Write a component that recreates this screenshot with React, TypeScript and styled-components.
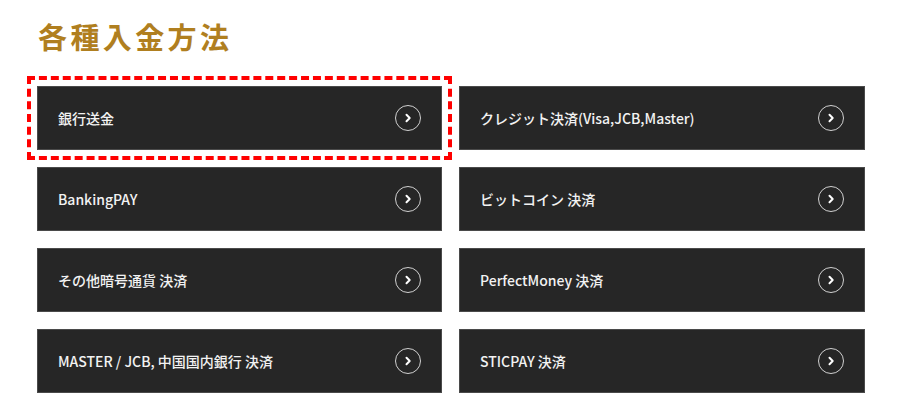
import styled, { createGlobalStyle } from 'styled-components';

const GlobalStyle = createGlobalStyle`
  body {
    margin: 0;
    background: #ffffff;
    font-family: "Noto Sans CJK JP", "Noto Sans", sans-serif;
  }
`;

const Section = styled.section`
  padding: 17px 35px 0 37px;
`;

const Heading = styled.h2`
  margin: 0 0 31px 1px;
  font-size: 29px;
  line-height: 38px;
  font-weight: 700;
  letter-spacing: 3.4px;
  color: #b07f1f;
`;

const Grid = styled.div`
  display: grid;
  grid-template-columns: 405px 406px;
  column-gap: 17px;
  row-gap: 17px;
`;

const Card = styled.a<{ $selected?: boolean }>`
  display: flex;
  align-items: center;
  justify-content: space-between;
  height: 64px;
  box-sizing: border-box;
  padding: 0 20px 0 20px;
  background: #262626;
  border: 1px solid #4a4a4a;
  color: #f2f2f2;
  text-decoration: none;
  font-size: 14px;
  font-weight: 500;
  outline: ${({ $selected }) => ($selected ? '4px dashed #f00' : 'none')};
  outline-offset: 6px;
`;

const Arrow = styled.span`
  display: flex;
  align-items: center;
  justify-content: center;
  width: 26px;
  height: 26px;
  box-sizing: border-box;
  border: 1.5px solid #d0d0d0;
  border-radius: 50%;
`;

const methods = [
  '銀行送金',
  'クレジット決済(Visa,JCB,Master)',
  'BankingPAY',
  'ビットコイン 決済',
  'その他暗号通貨 決済',
  'PerfectMoney 決済',
  'MASTER / JCB, 中国国内銀行 決済',
  'STICPAY 決済',
];

const App = () => (
  <>
    <GlobalStyle />
    <Section>
      <Heading>各種入金方法</Heading>
      <Grid>
        {methods.map((label, i) => (
          <Card key={label} href="#" $selected={i === 0}>
            <span>{label}</span>
            <Arrow>
              <svg width="10" height="10" viewBox="0 0 10 10">
                <path d="M3.5 1.8 L6.7 5 L3.5 8.2" fill="none" stroke="#fff" strokeWidth="2" strokeLinecap="round" strokeLinejoin="round" />
              </svg>
            </Arrow>
          </Card>
        ))}
      </Grid>
    </Section>
  </>
);

export default App;
